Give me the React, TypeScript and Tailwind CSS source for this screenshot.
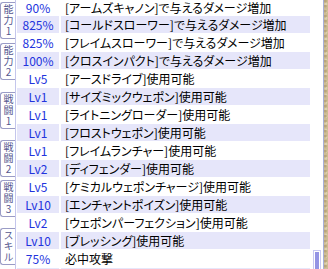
const rows: [string, string][] = [
  ["90%", "[アームズキャノン]で与えるダメージ増加"],
  ["825%", "[コールドスローワー]で与えるダメージ増加"],
  ["825%", "[フレイムスローワー]で与えるダメージ増加"],
  ["100%", "[クロスインパクト]で与えるダメージ増加"],
  ["Lv5", "[アースドライブ]使用可能"],
  ["Lv1", "[サイズミックウェポン]使用可能"],
  ["Lv1", "[ライトニングローダー]使用可能"],
  ["Lv1", "[フロストウェポン]使用可能"],
  ["Lv1", "[フレイムランチャー]使用可能"],
  ["Lv2", "[ディフェンダー]使用可能"],
  ["Lv5", "[ケミカルウェポンチャージ]使用可能"],
  ["Lv10", "[エンチャントポイズン]使用可能"],
  ["Lv2", "[ウェポンパーフェクション]使用可能"],
  ["Lv10", "[ブレッシング]使用可能"],
  ["75%", "必中攻撃"],
  ["", ""],
]

const tabs = [
  { label: "能力1", mt: "mt-[2px]" },
  { label: "能力2", mt: "mt-[4px]" },
  { label: "戦闘1", mt: "mt-[12px]" },
  { label: "戦闘2", mt: "mt-[11px]" },
  { label: "戦闘3", mt: "mt-[3px]" },
  { label: "スキル", mt: "mt-[11px]" },
]

const font = "font-['MS_UI_Gothic','Noto_Sans_CJK_JP',sans-serif]"

const Tab = ({ label, mt }: { label: string; mt: string }) => (
  <div
    className={`${mt} flex h-[37px] w-[15px] items-center justify-center rounded-l-[3px] border-y border-l border-[#9a9cc6] bg-white`}
  >
    <span className="text-[10px] leading-[12px] tracking-[1px] text-[#55578f] [text-orientation:upright] [writing-mode:vertical-rl]">
      {label}
    </span>
  </div>
)

export default function App() {
  return (
    <div className={`flex h-[269px] w-[328px] overflow-hidden bg-white ${font}`}>
      <div className="flex w-[16px] shrink-0 flex-col border-r border-[#c4c6ec]">
        {tabs.map((t, i) => (
          <Tab key={i} label={t.label} mt={t.mt} />
        ))}
      </div>
      <div className="w-[294px] shrink-0 overflow-hidden pl-px">
        <div className="flex flex-col gap-px">
          {rows.map(([v, d], i) => {
            const bg = i % 2 ? "bg-[#e6e6fa]" : "bg-white"
            return (
              <div key={i} className={`flex gap-[2px] ${i === 0 ? "h-[15px]" : "h-[17px]"}`}>
                <div
                  className={`flex w-[42px] shrink-0 items-center justify-center text-[12px] text-[#2233dd] ${bg}`}
                >
                  {v}
                </div>
                <div
                  className={`flex flex-1 items-center pl-[4px] text-[12px] text-black [font-feature-settings:'palt'] ${bg}`}
                >
                  {d}
                </div>
              </div>
            )
          })}
        </div>
      </div>
      <div className="flex w-[13px] shrink-0 items-end justify-center">
        <div className="mb-[-4px] h-[23px] w-[8px] border border-[#c8c8f2] bg-white p-px">
          <div className="h-full w-full bg-[#9494e4]" />
        </div>
      </div>
      <div className="w-px shrink-0 bg-[#a9b0d9]" />
      <div className="flex-1 bg-[#cdbb93] bg-[radial-gradient(circle_at_30%_20%,#b9a57c_0_1px,transparent_2px),radial-gradient(circle_at_70%_60%,#ddd0ad_0_1px,transparent_2px)] bg-[length:4px_5px,3px_7px]" />
    </div>
  )
}
